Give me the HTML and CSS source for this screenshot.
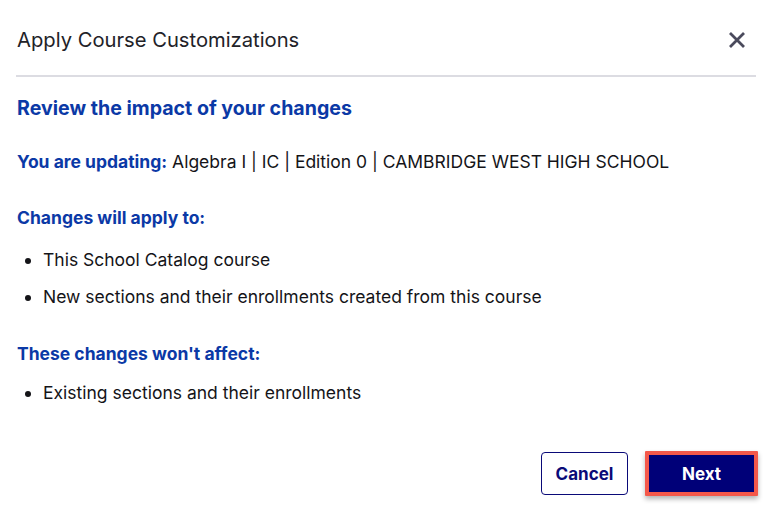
FILE: index.html
```html
<!DOCTYPE html>
<html lang="en">
<head>
<meta charset="utf-8">
<title>Apply Course Customizations</title>
<link rel="stylesheet" href="styles.css">
</head>
<body>
<div class="dialog">
  <header class="dialog-header">
    <h1 class="dialog-title">Apply Course Customizations</h1>
    <button class="close-btn" aria-label="Close">
      <svg width="18" height="18" viewBox="0 0 18 18"><path d="M2 2 L16 16 M16 2 L2 16" stroke="#4a4a5c" stroke-width="2.8" stroke-linecap="butt"/></svg>
    </button>
  </header>
  <main class="dialog-body">
    <h2 class="heading">Review the impact of your changes</h2>
    <p class="updating"><strong class="label">You are updating:</strong> Algebra I | IC | Edition 0 | CAMBRIDGE WEST HIGH SCHOOL</p>
    <h3 class="section-label first">Changes will apply to:</h3>
    <ul class="list">
      <li>This School Catalog course</li>
      <li>New sections and their enrollments created from this course</li>
    </ul>
    <h3 class="section-label second">These changes won't affect:</h3>
    <ul class="list">
      <li>Existing sections and their enrollments</li>
    </ul>
  </main>
  <footer class="dialog-footer">
    <button class="btn btn-secondary">Cancel</button>
    <button class="btn btn-primary">Next</button>
  </footer>
</div>
</body>
</html>
```
FILE: styles.css
```css
* { box-sizing: border-box; }
html, body { margin: 0; padding: 0; background: #fff; }
body {
  font-family: Inter, "Noto Sans", "Liberation Sans", sans-serif;
  color: #141418;
}
.dialog {
  width: 775px;
  height: 512px;
  padding: 0 17px 0 16px;
  display: flex;
  flex-direction: column;
}
.dialog-header {
  display: flex;
  align-items: center;
  justify-content: space-between;
  padding: 28px 0 23px 1px;
  border-bottom: 2px solid #dcdce2;
  margin-right: 2px;
}
.dialog-title {
  margin: 0;
  font-size: 20.2px;
  line-height: 24px;
  font-weight: 400;
  color: #222228;
}
.close-btn {
  border: 0;
  background: none;
  padding: 0;
  width: 18px;
  height: 18px;
  margin-right: 10px;
  display: flex;
  cursor: pointer;
}
.dialog-body { padding-left: 1px; }
.heading {
  margin: 19px 0 0;
  font-size: 19.6px;
  line-height: 24px;
  font-weight: 700;
  color: #0b39a6;
}
.updating {
  margin: 30px 0 0;
  font-size: 17.5px;
  line-height: 24px;
}
.label { color: #0b39a6; font-weight: 700; }
.section-label {
  margin: 0;
  font-size: 17.5px;
  line-height: 24px;
  font-weight: 700;
  color: #0b39a6;
}
.section-label.first { margin-top: 32px; }
.section-label.second { margin-top: 33px; }
.list {
  margin: 18px 0 0;
  padding-left: 26px;
  font-size: 17.5px;
  line-height: 24px;
}
.section-label.second + .list { margin-top: 15px; }
.list li + li { margin-top: 13px; }
.dialog-footer {
  display: flex;
  justify-content: flex-end;
  align-items: center;
  gap: 17px;
  margin-top: 46px;
}
.btn {
  font-family: inherit;
  font-size: 17px;
  font-weight: 700;
  cursor: pointer;
}
.btn-secondary {
  width: 87px;
  height: 43px;
  border: 1px solid #0a0a78;
  border-radius: 4px;
  background: #fff;
  color: #0a0a78;
}
.btn-primary {
  width: 113px;
  height: 45px;
  border: 4px solid #f4584a;
  border-radius: 1px;
  background: #000078;
  color: #fff;
  box-shadow: 0 3px 5px rgba(0, 0, 0, 0.3);
}
```
